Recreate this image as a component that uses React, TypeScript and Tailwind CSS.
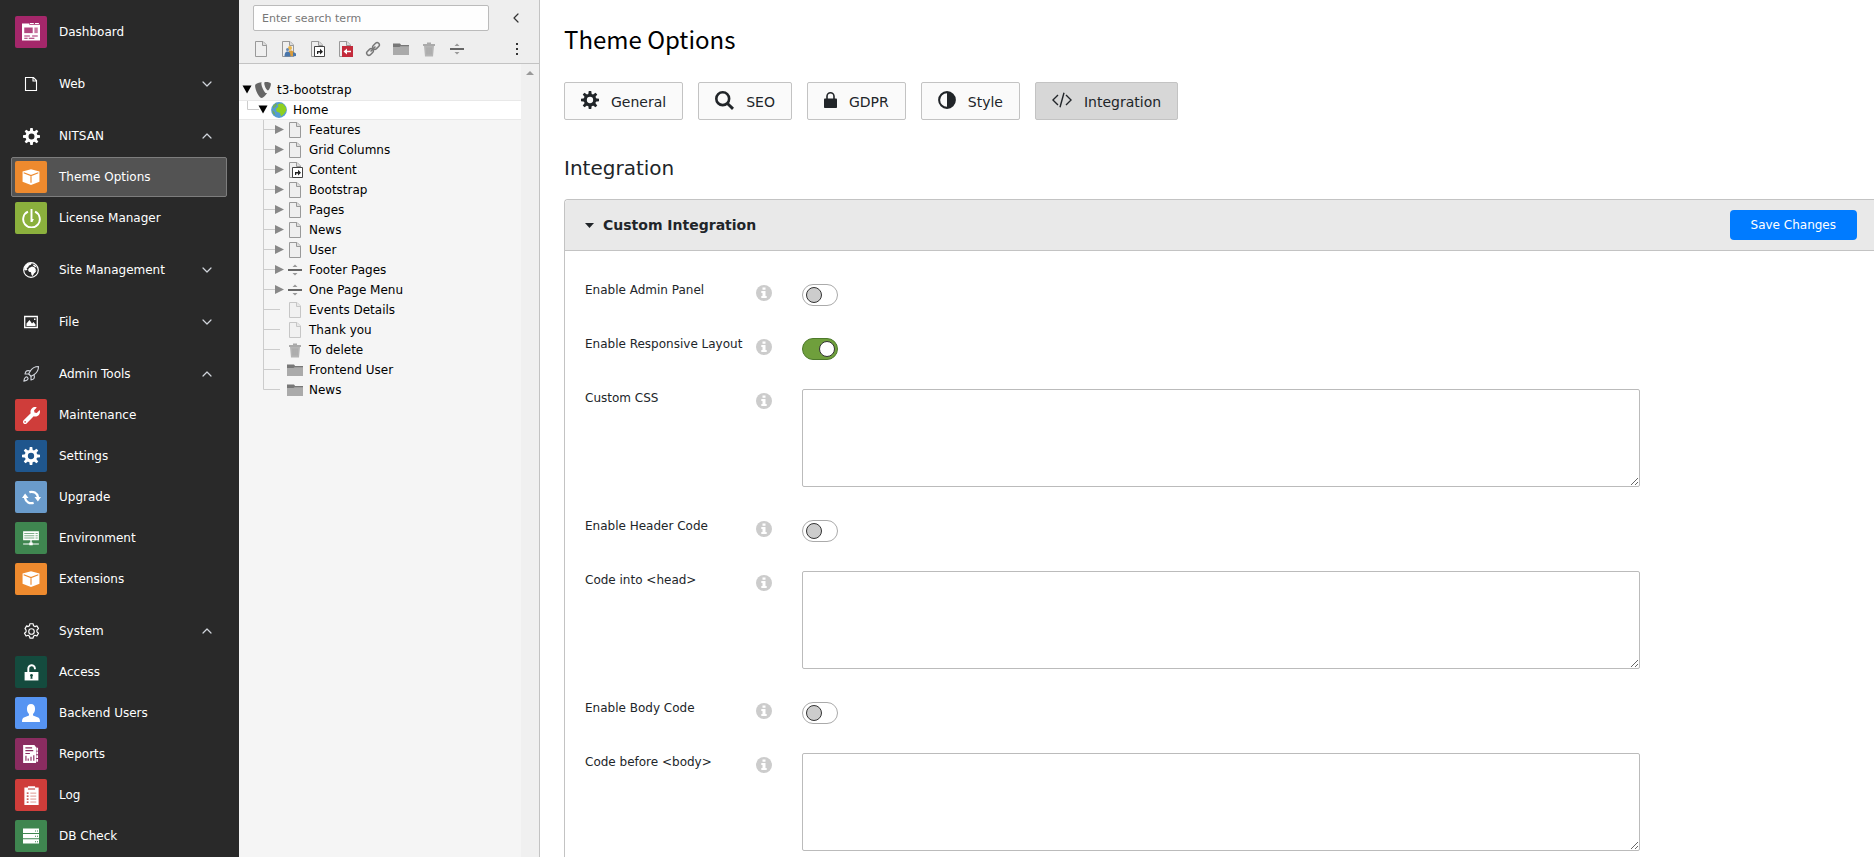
import React from 'react';
import { ChevronDown, ChevronLeft, ChevronUp, Rocket } from 'lucide-react';
import { FaWrench } from 'react-icons/fa';
import { SiTypo3 } from 'react-icons/si';

type IconProps = { className?: string };

const Svg: React.FC<IconProps & { children: React.ReactNode }> = ({ className = 'size-4', children }) => (
  <svg viewBox="0 0 16 16" className={`shrink-0 ${className}`} fill="currentColor" aria-hidden="true">
    {children}
  </svg>
);

const Gear: React.FC<IconProps> = ({ className }) => (
  <Svg className={className}>
    <circle cx="8" cy="8" r="4.2" fill="none" stroke="currentColor" strokeWidth="2.8" />
    {[0, 45, 90, 135, 180, 225, 270, 315].map((deg) => (
      <path key={deg} d="M6.4 3.4 6.9 0h2.2l.5 3.4z" transform={`rotate(${deg} 8 8)`} />
    ))}
  </Svg>
);

const GearOutline: React.FC<IconProps> = ({ className }) => (
  <Svg className={className}>
    <g fill="none" stroke="currentColor" strokeWidth="1.1" strokeLinejoin="round">
      <circle cx="8" cy="8" r="2.6" />
      <path d="M6.5.7h3l.4 1.9 1.3.8 1.9-.7 1.5 2.6-1.5 1.3v1.8l1.5 1.3-1.5 2.6-1.9-.7-1.3.8-.4 1.9h-3l-.4-1.9-1.3-.8-1.9.7-1.5-2.6 1.5-1.3V6.6L1.9 5.3l1.5-2.6 1.4.7 1.3-.8z" />
    </g>
  </Svg>
);

const PageOutline: React.FC<IconProps> = ({ className }) => (
  <Svg className={className}>
    <path d="M2.5 1.5h8l3 3v10h-11zM10 1.5V5h3.5" fill="none" stroke="currentColor" strokeWidth="1.1" />
  </Svg>
);

const DashboardIcon: React.FC<IconProps> = ({ className }) => (
  <Svg className={className}>
    <path d="M0 .5h6.5v1H16v14H0z" />
    <path d="M7 0h3.5v.8H7zM11.5 0H15v.8h-3.5z" />
    <path d="M2 4h7.5v5H2z" fill="#a4276a" opacity=".85" />
    <path d="M11 4h3v5h-3z" fill="#c97ba3" />
    <path d="M2 11h5v1H2zM9 11h5v1H9zM2 13h3v1H2zM6 13h5v1H6z" fill="#a4276a" />
  </Svg>
);

const Box: React.FC<IconProps> = ({ className }) => (
  <Svg className={className}>
    <path d="M8 1l7.5 2.2v9L8 15 .5 12.2v-9z" />
    <path d="M1.5 4.2 8 6.7l6.5-2.5M8 6.7v6.5" stroke="#ee8a2e" strokeWidth="1" fill="none" />
  </Svg>
);

const Power: React.FC<IconProps> = ({ className }) => (
  <Svg className={className}>
    <path d="M5 2.3a7 7 0 1 0 6 0" fill="none" stroke="currentColor" strokeWidth="1.6" />
    <path d="M7.2 0h1.6v8.5H10L8.8 11H7.2z" />
  </Svg>
);

const Globe: React.FC<IconProps> = ({ className }) => (
  <Svg className={className}>
    <circle cx="8" cy="8" r="7.3" fill="none" stroke="currentColor" strokeWidth="1.2" />
    <path d="M1.5 5 4 2 7 .8l2 .7L7.5 3 6 3.5 5 5.5 3.5 6l1 1.5-1.5 1L1.2 8z" />
    <path d="M6 6l3-1.5 2.5.7L13 7.5l-1 .7 1.5.3-1.3 2-1.2 1L9.800 14l-1.300-1-.5-2.800-2-.5L5 8z" />
    <path d="M9.5 2.5 12 3l2 2.5-2-.5-1.500-1z" />
  </Svg>
);

const Picture: React.FC<IconProps> = ({ className }) => (
  <Svg className={className}>
    <path d="M1.7 2.5h12.6v11H1.7z" fill="none" stroke="currentColor" strokeWidth="1.3" />
    <path d="M3.5 12V9.5l3-3.5L9 9.5 10.5 8l2 2.5V12zM11 4.5h1.5V6H11z" />
  </Svg>
);

const Refresh: React.FC<IconProps> = ({ className }) => (
  <Svg className={className}>
    <path d="M6.2 3.5c3.3-1 6.6.5 7.3 4.3M9.8 12.5c-3.3 1-6.6-.5-7.3-4.3" fill="none" stroke="currentColor" strokeWidth="1.9" />
    <path d="M10.5 7.5H16l-2.6 3.8zM0 8.5h5.5L2.6 4.7z" />
  </Svg>
);

const Environment: React.FC<IconProps> = ({ className }) => (
  <Svg className={className}>
    <path d="M1 2h14v8H1zM7.4 10h1.2v3H7.4zM1 12.8h14v1H1zM6.5 12h3v2.5h-3z" />
    <path d="M2 4h9M2 6h9M2 8h9M12 4h2M12 6h2M12 8h2" stroke="#3f8650" strokeWidth=".6" />
  </Svg>
);

const Unlock: React.FC<IconProps> = ({ className }) => (
  <Svg className={className}>
    <path d="M5 7.5v-3a3 3 0 0 1 6.2-.5v1" fill="none" stroke="currentColor" strokeWidth="1.8" />
    <path d="M1.5 7.5h13v8h-13z" />
    <path d="M8 9.3a1.4 1.4 0 0 1 .7 2.6l.3 2H7l.3-2A1.4 1.4 0 0 1 8 9.3z" fill="#144b3e" />
  </Svg>
);

const User: React.FC<IconProps> = ({ className }) => (
  <Svg className={className}>
    <path d="M8 0c2.3 0 3.6 1.5 3.6 4.2 0 2.2-.8 3.7-1.8 4.6v1.5l4.5 1.7c1.2.5 1.7 1.5 1.7 4H0c0-2.5.5-3.5 1.7-4l4.500-1.700V8.800C5.200 7.900 4.400 6.400 4.400 4.200 4.400 1.500 5.700 0 8 0z" />
  </Svg>
);

const Report: React.FC<IconProps> = ({ className }) => (
  <Svg className={className}>
    <path d="M1 0h10l1.5 2v14H1z" />
    <path d="M13.5 2.5v13" stroke="currentColor" strokeWidth="1.5" strokeDasharray="2.5 .8" />
    <path d="M3 2h6v1H3zM3 4.5h7v1H3zM3 7h4v1H3zM3 9.5h1V14H3zM5 12h1v2H5zM7.5 10.5h1V14h-1zM10 9h1v5h-1z" fill="#8a2c60" />
  </Svg>
);

const LogIcon: React.FC<IconProps> = ({ className }) => (
  <Svg className={className}>
    <path d="M2 1.2h3v-1h6v1h3V16H2z" />
    <path d="M5 2h6v1H5zM4 5.5h1.5v1H4zM4 8h1.5v1H4zM4 10.5h1.5v1H4zM4 13h1.5v1H4z" fill="#b8302a" />
    <path d="M7 6h5M7 8.5h5M7 11h5M7 13.5h5" stroke="#dd928c" strokeWidth=".8" />
  </Svg>
);

const Database: React.FC<IconProps> = ({ className }) => (
  <Svg className={className}>
    <path d="M0 .5h16v4.4H0zM0 5.9h16v4.3H0zM0 11.2h16v4.3H0z" />
    <path d="M12 2.5h1v1h-1zM14 2.5h1v1h-1zM12 7.8h1v1h-1zM14 7.8h1v1h-1zM12 13.2h1v1h-1zM14 13.2h1v1h-1z" fill="#3f8650" />
  </Svg>
);

/* Page tree icons */

const Page: React.FC<IconProps> = ({ className }) => (
  <Svg className={className}>
    <path d="M2.5.5H10L13.5 4v11.5h-11z" fill="#efefef" stroke="#999" />
    <path d="M9.5.5v4h4" fill="#ddd" stroke="#999" />
  </Svg>
);

const PageShortcut: React.FC<IconProps> = ({ className }) => (
  <Svg className={className}>
    <path d="M2.5.5H10L13.5 4v11.5h-11z" fill="#efefef" stroke="#999" />
    <path d="M9.5.5v4h4" fill="#ddd" stroke="#999" />
    <path d="M5.5 5.5h10v10h-10z" fill="#fff" stroke="#444" />
    <path d="M8 13v-3h3V7.8l3 2.9-3 2.8v-2H9.2V13z" fill="#222" />
  </Svg>
);

const PageUsers: React.FC<IconProps> = ({ className }) => (
  <Svg className={className}>
    <path d="M1.5.5H9L12.5 4v11.5h-11z" fill="#efefef" stroke="#999" />
    <path d="M8.5.5v4h4" fill="#ddd" stroke="#999" />
    <circle cx="9" cy="7" r="2" fill="#eab54b" />
    <path d="M8 9.5h3l3 2.5v3H7z" fill="#d99c3c" />
    <circle cx="6.5" cy="8.5" r="1.5" fill="#6689b5" />
    <path d="M3.5 15.5c0-4 1.5-5 3-5s3 1 3 5z" fill="#4976ab" />
    <path d="M12 11l3 1.5V15l-3 .5z" fill="#4976ab" />
  </Svg>
);

const PageMount: React.FC<IconProps> = ({ className }) => (
  <Svg className={className}>
    <path d="M2.5.5H10L13.5 4v11.5h-11z" fill="#efefef" stroke="#999" />
    <path d="M9.5.5v4h4" fill="#ddd" stroke="#999" />
    <path d="M5 5h11v11H5z" fill="#c32a3b" />
    <path d="M6.5 10.5l3.5-3v2.2h4v1.6h-4v2.2z" fill="#fff" />
  </Svg>
);

const LinkIcon: React.FC<IconProps> = ({ className }) => (
  <Svg className={className}>
    <g fill="none" stroke="#777" strokeWidth="1.5" transform="rotate(-45 8 8)">
      <rect x="0" y="5.8" width="7.5" height="4.4" rx="2.2" />
      <rect x="8.5" y="5.8" width="7.5" height="4.4" rx="2.2" />
      <path d="M4.5 8h7" />
    </g>
  </Svg>
);

const Folder: React.FC<IconProps> = ({ className }) => (
  <Svg className={className}>
    <path d="M0 3h7l1 1.5h8V14H0z" fill="#aaa" />
    <path d="M0 2.5h7L8 4h8v1.2H7.5L6.500 6H0z" fill="#777" />
  </Svg>
);

const Trash: React.FC<IconProps> = ({ className }) => (
  <Svg className={className}>
    <path d="M3 5h10l-1 10.5H4z" fill="#b5b5b5" />
    <path d="M2 3h12v2H2zM6 1.5h4V3H6z" fill="#aaa" />
    <path d="M6 6.5v7M8 6.5v7M10 6.5v7" stroke="#a3a3a3" strokeWidth=".8" />
  </Svg>
);

const Divider: React.FC<IconProps> = ({ className }) => (
  <Svg className={className}>
    <path d="M1 7h14v2H1z" fill="#666" />
    <path d="M5.5 5 8 2.5 10.5 5zM5.5 11 8 13.5l2.5-2.5z" fill="#999" />
  </Svg>
);

const HomeGlobe: React.FC<IconProps> = ({ className }) => (
  <Svg className={className}>
    <circle cx="8" cy="8" r="7.9" fill="#559bd3" />
    <path d="M8.5 1.5l3.5.3 3 3.7.3 3-2.3 3.5-3 2.5-1-3.5-3.5-1.5L5 7l2.5-2.5-1-1.5z" fill="#8fd01f" />
    <path d="M2 3.5 5 1.2l1 1.3L4.5 5 2 6.5zM1 8l2.5 2 1 3.5L2 11.5z" fill="#6fae5c" />
  </Svg>
);

/* Tab icons */

const SearchIcon: React.FC<IconProps> = ({ className }) => (
  <Svg className={className}>
    <circle cx="6.5" cy="6.5" r="5.4" fill="none" stroke="currentColor" strokeWidth="2.2" />
    <path d="M10.5 10.5l4.7 4.5" stroke="currentColor" strokeWidth="2.5" />
  </Svg>
);

const LockIcon: React.FC = () => (
  <svg viewBox="0 0 13 16" className="h-4 w-[13px] shrink-0" fill="currentColor" aria-hidden="true">
    <path d="M3 7.5V4.3a3.5 3.5 0 0 1 7 0v3.2" fill="none" stroke="currentColor" strokeWidth="1.6" />
    <rect y="6.5" width="13" height="9.5" rx=".8" />
  </svg>
);

const Contrast: React.FC<IconProps> = ({ className }) => (
  <Svg className={className}>
    <circle cx="8" cy="8" r="7" fill="none" stroke="currentColor" strokeWidth="1.8" />
    <path d="M8 1a7 7 0 0 1 0 14z" />
  </Svg>
);

const Code: React.FC = () => (
  <svg viewBox="0 0 20 16" className="h-4 w-5 shrink-0" fill="none" stroke="currentColor" strokeWidth="1.4" aria-hidden="true">
    <path d="M6 3 .9 8 6 13M14 3l5.1 5-5.1 5M12 .8 8 15.2" />
  </svg>
);

const Info: React.FC = () => (
  <svg viewBox="0 0 16 16" className="size-4" aria-hidden="true">
    <circle cx="8" cy="8" r="8" fill="#ccc" />
    <path d="M6.5 2.5h3v2.3h-3zM5.3 6h4.2v5h1.200v1.900H5.300V11h1.200V7.900H5.300z" fill="#fff" />
  </svg>
);

type MenuItem = { label: string; icon: React.ReactNode; color: string; active?: boolean };
type MenuGroup = { label: string; icon?: React.ReactNode; open?: boolean; items?: MenuItem[] };

const menu: MenuGroup[] = [
  { label: '', items: [{ label: 'Dashboard', icon: <DashboardIcon className="size-[18px]" />, color: 'bg-[#a4276a]' }] },
  { label: 'Web', icon: <PageOutline /> },
  {
    label: 'NITSAN',
    icon: <Gear className="size-[17px]" />,
    open: true,
    items: [
      { label: 'Theme Options', icon: <Box className="size-[18px]" />, color: 'bg-[#ee8a2e]', active: true },
      { label: 'License Manager', icon: <Power className="size-[19px]" />, color: 'bg-[#8bb03d]' },
    ],
  },
  { label: 'Site Management', icon: <Globe /> },
  { label: 'File', icon: <Picture /> },
  {
    label: 'Admin Tools',
    icon: <Rocket size={18} strokeWidth={1.5} className="text-gray-300" />,
    open: true,
    items: [
      { label: 'Maintenance', icon: <FaWrench size={17} />, color: 'bg-[#cf3d3a]' },
      { label: 'Settings', icon: <Gear className="size-[18px]" />, color: 'bg-[#1f568d]' },
      { label: 'Upgrade', icon: <Refresh className="size-[19px]" />, color: 'bg-[#6a9bcb]' },
      { label: 'Environment', icon: <Environment className="size-[18px]" />, color: 'bg-[#3f8650]' },
      { label: 'Extensions', icon: <Box className="size-[18px]" />, color: 'bg-[#ee8a2e]' },
    ],
  },
  {
    label: 'System',
    icon: <GearOutline className="size-[17px]" />,
    open: true,
    items: [
      { label: 'Access', icon: <Unlock className="size-[17px]" />, color: 'bg-[#144b3e]' },
      { label: 'Backend Users', icon: <User className="size-[18px]" />, color: 'bg-[#5694f2]' },
      { label: 'Reports', icon: <Report className="size-[18px]" />, color: 'bg-[#8a2c60]' },
      { label: 'Log', icon: <LogIcon className="size-[19px]" />, color: 'bg-[#cf3d3a]' },
      { label: 'DB Check', icon: <Database className="size-4" />, color: 'bg-[#3f8650]' },
    ],
  },
];

const Sidebar: React.FC = () => (
  <nav className="flex w-[239px] shrink-0 flex-col gap-3 overflow-hidden bg-[#292929] pt-3 pr-3 pl-[11px] text-xs font-medium text-white">
    {menu.map((group, i) => (
      <div key={i} className="flex flex-col gap-px">
        {group.label && (
          <button type="button" className="flex h-10 items-center gap-3 pr-3 pl-1 text-left">
            <span className="flex size-8 items-center justify-center">{group.icon}</span>
            <span className="flex-1">{group.label}</span>
            {group.open ? (
              <ChevronUp size={16} strokeWidth={1.8} className="text-gray-300" />
            ) : (
              <ChevronDown size={16} strokeWidth={1.8} className="text-gray-300" />
            )}
          </button>
        )}
        {group.items?.map((item) => (
          <a
            key={item.label}
            href="#"
            className={`flex h-10 items-center gap-3 rounded-xs border pl-[3px] ${item.active ? 'border-[#7d7d7d] bg-[#535353]' : 'border-transparent'}`}
          >
            <span className={`flex size-8 items-center justify-center rounded-xs ${item.color}`}>{item.icon}</span>
            {item.label}
          </a>
        ))}
      </div>
    ))}
  </nav>
);

const newPageTypes = [
  { name: 'Standard', icon: <Page /> },
  { name: 'Backend User Section', icon: <PageUsers /> },
  { name: 'Shortcut', icon: <PageShortcut /> },
  { name: 'Mount Point', icon: <PageMount /> },
  { name: 'Link to External URL', icon: <LinkIcon /> },
  { name: 'Folder', icon: <Folder /> },
  { name: 'Recycler', icon: <Trash /> },
  { name: 'Menu Separator', icon: <Divider /> },
];

const pages = [
  { label: 'Features', icon: <Page />, children: true },
  { label: 'Grid Columns', icon: <Page />, children: true },
  { label: 'Content', icon: <PageShortcut />, children: true },
  { label: 'Bootstrap', icon: <Page />, children: true },
  { label: 'Pages', icon: <Page />, children: true },
  { label: 'News', icon: <Page />, children: true },
  { label: 'User', icon: <Page />, children: true },
  { label: 'Footer Pages', icon: <Divider />, children: true },
  { label: 'One Page Menu', icon: <Divider />, children: true },
  { label: 'Events Details', icon: <Page className="size-4 opacity-50" /> },
  { label: 'Thank you', icon: <Page className="size-4 opacity-50" /> },
  { label: 'To delete', icon: <Trash /> },
  { label: 'Frontend User', icon: <Folder /> },
  { label: 'News', icon: <Folder /> },
];

const PageTree: React.FC = () => (
  <aside className="flex w-[301px] shrink-0 flex-col border-r border-[#c3c3c3] bg-[#f5f5f5]">
    <div className="flex h-16 flex-col gap-[10px] border-b border-[#c3c3c3] bg-[#eee] pt-[5px] pr-[15px] pl-[14px]">
      <div className="flex items-center justify-between">
        <input
          type="text"
          aria-label="Enter search term"
          placeholder="Enter search term"
          className="h-[26px] w-[236px] rounded-xs border border-[#bbb] bg-[#fefefe] px-2 text-[11px] placeholder:text-[#777]"
        />
        <button type="button" aria-label="Collapse">
          <ChevronLeft size={16} strokeWidth={1.8} className="text-[#333]" />
        </button>
      </div>
      <div className="flex items-center justify-between">
        <div className="flex gap-3">
          {newPageTypes.map((type) => (
            <button key={type.name} type="button" aria-label={type.name}>
              {type.icon}
            </button>
          ))}
        </div>
        <button type="button" aria-label="More" className="px-[6px] text-[#333]">
          <svg viewBox="0 0 2 12" className="h-3 w-[2px]" fill="currentColor">
            <path d="M0 0h2v2H0zM0 5h2v2H0zM0 10h2v2H0z" />
          </svg>
        </button>
      </div>
    </div>
    <div className="flex flex-1">
      <ul className="flex-1 pt-4 text-xs text-black">
        <li className="flex h-5 items-center">
          <svg viewBox="0 0 16 20" className="h-5 w-4 shrink-0">
            <path d="M3.5 5.5h9L8 13.5z" />
          </svg>
          <SiTypo3 size={16} className="text-[#666]" />
          <span className="pl-[6px]">t3-bootstrap</span>
        </li>
        <li className="flex h-5 items-center border-y border-[#e8e8e8] bg-white">
          <svg viewBox="0 0 32 18" className="h-[18px] w-8 shrink-0">
            <path d="M8.5 0v8.5H20" fill="none" stroke="#ccc" />
            <path d="M19.5 4.5h9l-4.5 8z" />
          </svg>
          <HomeGlobe />
          <span className="pl-[6px]">Home</span>
        </li>
        {pages.map((page, i) => (
          <li key={i} className="flex h-5 items-center">
            <svg viewBox="0 0 48 20" className="h-5 w-12 shrink-0">
              <path d={i === pages.length - 1 ? 'M24.5 0v9.5H41' : 'M24.5 0v20M24.5 9.5H41'} fill="none" stroke="#ccc" />
              {page.children && <path d="M36 5v9l9-4.5z" fill="#888" />}
            </svg>
            {page.icon}
            <span className="pl-[6px]">{page.label}</span>
          </li>
        ))}
      </ul>
      <div className="flex w-[18px] justify-center bg-[#f0f0f0] pt-[7px]">
        <svg viewBox="0 0 8 4" className="h-1 w-2" fill="#999">
          <path d="M0 4 4 0l4 4z" />
        </svg>
      </div>
    </div>
  </aside>
);

const tabs = [
  { label: 'General', icon: <Gear className="size-[18px]" /> },
  { label: 'SEO', icon: <SearchIcon className="size-[19px]" /> },
  { label: 'GDPR', icon: <LockIcon /> },
  { label: 'Style', icon: <Contrast className="size-[18px]" /> },
  { label: 'Integration', icon: <Code />, active: true },
];

const fields = [
  { id: 'adminPanel', label: 'Enable Admin Panel', type: 'toggle' },
  { id: 'responsive', label: 'Enable Responsive Layout', type: 'toggle', on: true },
  { id: 'customCss', label: 'Custom CSS', type: 'code' },
  { id: 'headerCode', label: 'Enable Header Code', type: 'toggle' },
  { id: 'codeHead', label: 'Code into <head>', type: 'code' },
  { id: 'bodyCode', label: 'Enable Body Code', type: 'toggle' },
  { id: 'codeBody', label: 'Code before <body>', type: 'code' },
];

const Toggle: React.FC<{ id: string; on?: boolean }> = ({ id, on }) => (
  <input
    id={id}
    type="checkbox"
    role="switch"
    defaultChecked={on}
    className="flex h-[22px] w-9 appearance-none items-center rounded-full border border-[#aaa] bg-white px-[3px] before:size-4 before:rounded-full before:border before:border-[#333] before:bg-[#ccc] before:content-[''] checked:justify-end checked:border-[#4d7a2b] checked:bg-[#6f9f3c] checked:pr-[2px] checked:before:bg-white"
  />
);

const App: React.FC = () => {
  return (
    <div className="flex h-screen overflow-hidden bg-white font-['DejaVu_Sans',sans-serif]">
      <Sidebar />
      <PageTree />
      <main className="min-w-0 flex-1 overflow-hidden pl-6 text-[#212529]">
        <h1 className="pt-5 font-['Noto_Sans_CJK_SC',sans-serif] text-2xl leading-[38px] text-black">Theme Options</h1>

        <div className="mt-6 flex gap-[15px]">
          {tabs.map((tab) => (
            <button
              key={tab.label}
              type="button"
              className={`flex h-[38px] items-center gap-3 rounded-xs border border-[#c3c3c3] px-4 text-sm ${tab.active ? 'bg-[#d7d7d7]' : 'bg-[#fafafa]'}`}
            >
              <span className="flex pb-[2px]">{tab.icon}</span>
              <span className="pt-[2px]">{tab.label}</span>
            </button>
          ))}
        </div>

        <h2 className="mt-[33px] text-xl leading-[30px]">Integration</h2>

        <section className="mt-4 rounded-tl-sm border-t border-l border-[#c3c3c3]">
          <header className="flex h-[51px] items-center justify-between rounded-tl-sm border-b border-[#c3c3c3] bg-[#e9e9e9] pr-[17px] pl-5">
            <button type="button" className="flex items-center gap-[9px] text-sm font-bold">
              <svg viewBox="0 0 9 5" className="h-[5px] w-[9px]" fill="currentColor">
                <path d="M0 0h9L4.5 5z" />
              </svg>
              Custom Integration
            </button>
            <button type="button" className="h-[30px] rounded-sm bg-[#007bff] px-[21px] text-xs text-white">
              Save Changes
            </button>
          </header>
          <div className="flex flex-col gap-[30px] py-[30px] pl-5">
            {fields.map((field) => (
              <div key={field.id} className="flex items-start">
                <label htmlFor={field.id} className="w-[171px] text-xs leading-[18px]">
                  {field.label}
                </label>
                <span className="w-[46px] pt-1">
                  <Info />
                </span>
                {field.type === 'toggle' ? (
                  <div className="-mb-px pt-[3px]">
                    <Toggle id={field.id} on={field.on} />
                  </div>
                ) : (
                  <textarea id={field.id} className="block h-[98px] w-[65%] rounded-xs border border-[#bbb] p-2 text-xs" />
                )}
              </div>
            ))}
          </div>
        </section>
      </main>
    </div>
  );
};

export default App;
